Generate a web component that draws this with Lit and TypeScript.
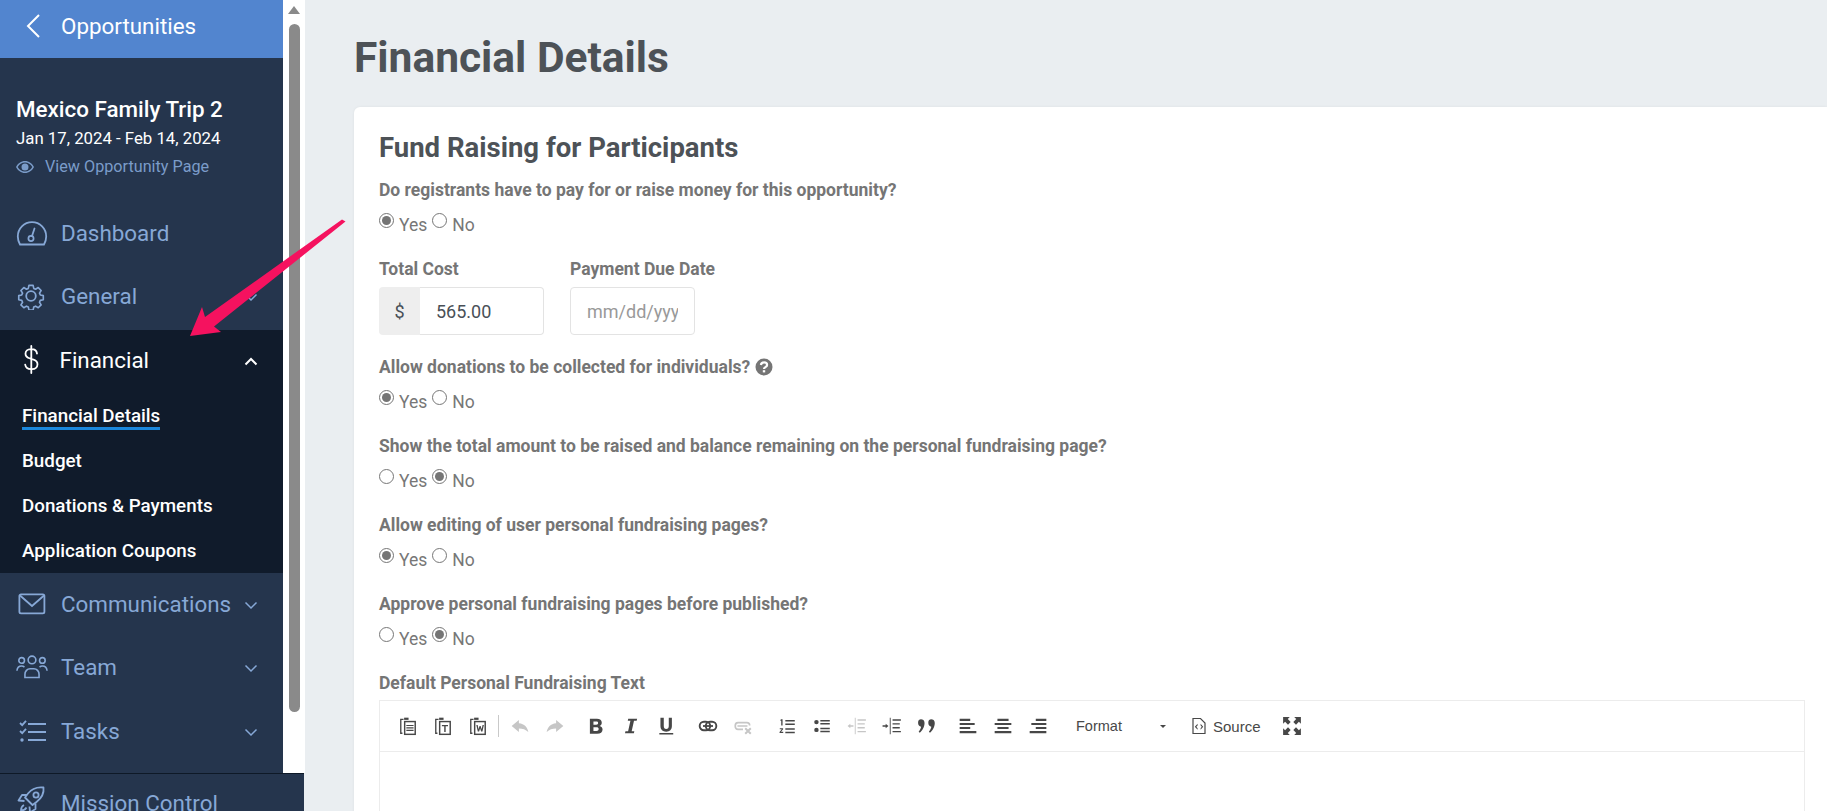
import { LitElement, html, css, svg } from "lit";
import { customElement } from "lit/decorators.js";

const stroke = (w: number, h: number, body: unknown, cls = "ic") =>
  html`<svg class=${cls} width=${w} height=${h} viewBox="0 0 ${w} ${h}" fill="none" stroke="currentColor">${body}</svg>`;

const icons: Record<string, unknown> = {
  dashboard: stroke(32, 26, svg`<path stroke-width="1.8" d="M4 24.500h24c1.400-2.400 2.200-5 2.200-8C30.200 8.500 24 2.200 16 2.200S1.800 8.500 1.800 16.500c0 3 .8 5.600 2.200 8z"/><circle cx="15" cy="18.500" r="2.600" stroke-width="1.700"/><path stroke-width="1.800" stroke-linecap="round" d="M16 16l2.500-7.500"/>`),
  gear: stroke(32, 28, svg`<g transform="translate(2 1)"><circle cx="13" cy="13" r="4.800" stroke-width="1.800"/><path stroke-width="1.800" stroke-linejoin="round" d="M10.700 1.300h4.600l.7 3.300 2 .9 2.900-1.800 3.200 3.200-1.800 2.900.9 2 3.300.7v4.600l-3.300.7-.9 2 1.800 2.900-3.200 3.200-2.900-1.800-2 .9-.7 3.300h-4.600l-.7-3.300-2-.9-2.900 1.800-3.200-3.200 1.800-2.900-.9-2-3.300-.7v-4.600l3.300-.7.9-2-1.800-2.900 3.200-3.200 2.900 1.800 2-.9z" transform="translate(1.200 1.200) scale(.91)"/></g>`),
  dollar: stroke(32, 30, svg`<path stroke-width="1.800" stroke-linecap="round" d="M21 8.500c-.4-2.600-2.400-4.300-5.300-4.300h-1c-3 0-5.200 2-5.200 4.600 0 2.500 1.500 3.900 4.500 4.700l3 .9c3 .8 4.500 2.300 4.500 4.900 0 2.800-2.300 4.900-5.400 4.900h-1.200c-3.100 0-5.200-1.700-5.700-4.500M15.300 1v27"/>`),
  mail: stroke(32, 24, svg`<rect x="3.400" y="2.400" width="25" height="19" rx="1.600" stroke-width="1.800"/><path stroke-width="1.800" d="M4 3.500l12 10.500 12-10.500"/>`),
  users: stroke(34, 26, svg`<g stroke-width="1.700"><circle cx="17" cy="5.500" r="4.100"/><circle cx="6" cy="6" r="3"/><circle cx="28" cy="6" r="3"/><path d="M9.500 24.200v-3.400c0-3.300 2.400-6 5.500-6h4c3.100 0 5.500 2.700 5.500 6v3.400z"/><path d="M1 17c.3-3 2.300-5 5-5 1.100 0 2 .3 3 1M33 17c-.3-3-2.300-5-5-5-1.100 0-2 .3-3 1"/></g>`),
  tasks: stroke(32, 24, svg`<g stroke-width="1.800"><path d="M12 5h18M12 13h18M12 21h18"/><path d="M4 4l2.200 2.200L10 1.800M4 12l2.200 2.200L10 9.800"/></g><circle cx="6" cy="21" r="1.700" fill="currentColor" stroke="none"/>`),
  rocket: stroke(32, 30, svg`<g stroke-width="1.800" stroke-linejoin="round"><path d="M27.500 2.500c-7-.8-12 1.500-15.500 6l-3 4 7.500 7.500 4-3c4.500-3.500 7.800-8 7-14.500z"/><circle cx="20" cy="10" r="2.600"/><path d="M11 10H6l-3.500 5.500 6 .5M19.500 18.500V24L14 27.500 13.500 21.500M8 20c-2 1-3 3-3 5.500 2.500 0 4.500-1 5.500-3"/></g>`),
};

const chevDown = html`<svg class="chev" width="14" height="9" viewBox="0 0 14 9" fill="none" stroke="currentColor" stroke-width="1.500"><path d="M1.500 1.500L7 7l5.500-5.500"/></svg>`;
const chevUp = html`<svg class="chev" width="14" height="9" viewBox="0 0 14 9" fill="none" stroke="currentColor" stroke-width="2"><path d="M1.500 7.500L7 2l5.500 5.500"/></svg>`;

const tb = (body: unknown, muted = false) =>
  html`<span class="tbtn ${muted ? "muted" : ""}"><svg width="20" height="20" viewBox="0 0 18 18" fill="currentColor">${body}</svg></span>`;

const clip = (inner: unknown) => svg`<path fill="none" stroke="currentColor" stroke-width="1.200" d="M5 3H2.500v12.500H4"/><path d="M5.500 1.500h4v2h-4z"/><rect x="6" y="5" width="9.500" height="11.500" fill="none" stroke="currentColor" stroke-width="1.300"/>${inner}`;

const T = {
  paste: clip(svg`<path d="M7.500 8h6.500v1H7.500zM7.500 10.200h6.500v1H7.500zM7.500 12.400h6.500v1H7.500z"/>`),
  pasteT: clip(svg`<path d="M8 8h5.500v1.300h-2.100v5h-1.300v-5H8z"/>`),
  pasteW: clip(svg`<path d="M7.500 8h1.200l.8 4 .9-3h1l.9 3 .8-4h1.200l-1.300 6h-1.200l-.9-3-.9 3H8.800z"/>`),
  undo: svg`<path d="M8 3.500L1.500 9 8 14.500v-3.300c3.500 0 6 .8 8.500 3.300-.8-4.500-3.500-7.500-8.500-8z"/>`,
  redo: svg`<path d="M10 3.500L16.500 9 10 14.500v-3.300c-3.500 0-6 .8-8.500 3.300.8-4.500 3.500-7.500 8.500-8z"/>`,
  bold: svg`<path fill-rule="evenodd" d="M3.500 2.500h6.300c2.800 0 4.400 1.300 4.400 3.500 0 1.400-.7 2.400-2 2.900 1.700.4 2.700 1.600 2.700 3.300 0 2.500-1.800 3.800-4.900 3.800H3.500zM6.700 5v2.900h2.500c1.100 0 1.700-.5 1.700-1.500S10.300 5 9.200 5zM6.700 10.200v3.300h2.800c1.200 0 1.900-.6 1.900-1.700s-.7-1.600-1.900-1.600z"/>`,
  italic: svg`<path d="M6.500 2.500h8l-.4 1.800h-2.400L9.600 13.700H12l-.4 1.800h-8l.4-1.800h2.400l2.100-9.400H6.100z"/>`,
  underline: svg`<path d="M4 1.500h3v7.500c0 1.700.7 2.600 2.200 2.600s2.300-.9 2.300-2.600V1.500h2.800v7.600c0 3.300-1.900 5-5.100 5S4 12.400 4 9.100zM3 15.300h12.500v1.400H3z"/>`,
  link: svg`<g fill="none" stroke="currentColor" stroke-width="1.700"><rect x="1.500" y="5.200" width="9.500" height="7.600" rx="3.800"/><rect x="7" y="5.200" width="9.500" height="7.600" rx="3.800"/></g><path d="M4.500 8.200h9v1.600h-9z"/>`,
  unlink: svg`<path fill="none" stroke="currentColor" stroke-width="1.500" d="M9 12H4.500C3 12 2 10.800 2 9s1-3 2.500-3h8C14 6 15 7 15 8.500M4 9h9"/><path fill="none" stroke="currentColor" stroke-width="1.800" d="M11 11l5 5M16 11l-5 5"/>`,
  ol: svg`<path d="M7.500 3.500H16v1.400H7.500zM7.500 6.700H16v1.400H7.500zM7.500 11H16v1.400H7.500zM7.500 14.200H16v1.400H7.500zM3.500 3H5v5.500H3.800V4.200h-.9zM2.500 11h3v1l-1.900 2.200h2v1.100H2.300v-1l2-2.300H2.500z"/>`,
  ul: svg`<circle cx="4" cy="5.500" r="2"/><circle cx="4" cy="12.500" r="2"/><path d="M7.500 3.500H16v1.400H7.500zM7.500 6.200H16v1.400H7.500zM7.500 10.500H16v1.400H7.500zM7.500 13.200H16v1.400H7.500z"/>`,
  outdent: svg`<path d="M7 1.500h.8v15H7zM9.500 3H17v1.200H9.500zM9.500 6.500H16v1.200H9.500zM9.500 10H16v1.200H9.500zM9.500 13.500H17v1.200H9.500zM5.800 8.400v1.200H3v1.500L.5 9 3 6.900v1.500z"/>`,
  indent: svg`<path d="M7 1.500h.8v15H7zM9.500 3H17v1.200H9.500zM9.500 6.500H16v1.200H9.500zM9.500 10H16v1.200H9.500zM9.500 13.500H17v1.200H9.500zM.5 8.400v1.200h2.800v1.500L5.800 9 3.300 6.900v1.500z"/>`,
  quote: svg`<path d="M1 5.500C1 4.100 2.100 3 3.600 3s3.200 1 3.200 3.200c0 3.800-2.300 7-4.300 8.800l-1-.8c1.100-1.500 2-3 2.200-4.500C2.100 9.400 1 8 1 6.500zM10.200 5.500C10.200 4.100 11.300 3 12.800 3S16 4 16 6.200c0 3.800-2.300 7-4.300 8.800l-1-.8c1.100-1.500 2-3 2.200-4.500-1.600-.3-2.700-1.700-2.700-3.200z"/>`,
  left: svg`<path d="M1.500 2.500h9.500v2H1.500zM1.500 6.200H15v2H1.500zM1.500 9.800h9.500v2H1.500zM1.500 13.500H16.500v2H1.500z"/>`,
  center: svg`<path d="M4 2.500h10v2H4zM1.500 6.200h15v2h-15zM4 9.800h10v2H4zM1.500 13.500h15v2h-15z"/>`,
  right: svg`<path d="M7 2.500h9.500v2H7zM3 6.200h13.500v2H3zM7 9.800h9.500v2H7zM1.500 13.500h15v2h-15z"/>`,
  source: svg`<path fill="none" stroke="currentColor" stroke-width="1.200" d="M3 1.500h7.500L15 6v10.500H3z"/><path d="M7.600 6.800L4.800 9.800l2.800 3v-1.600L6.300 9.800l1.300-1.400zM10.600 6.800l2.600 3-2.600 3v-1.600l1.200-1.400-1.200-1.400z"/>`,
  max: svg`<path d="M1 1h6L5.200 2.800 7.800 5.400 5.400 7.800 2.800 5.200 1 7zM17 1v6l-1.800-1.800-2.600 2.600-2.400-2.400 2.600-2.600L11 1zM1 17v-6l1.800 1.800 2.600-2.600 2.400 2.400-2.600 2.600L7 17zM17 17h-6l1.800-1.800-2.600-2.600 2.400-2.400 2.600 2.600L17 11z"/>`,
};

@customElement("app-root")
export class AppRoot extends LitElement {
  static styles = css`
    :host { display: block; height: 811px; overflow: hidden; position: relative; font-family: Roboto, sans-serif; background: #eaeef1; }
    .page { display: flex; height: 811px; }
    .side { width: 304px; flex: none; height: 811px; display: flex; flex-direction: column; }
    .sidetop { display: flex; height: 773px; flex: none; }
    .nav { width: 283px; flex: none; background: #25354d; overflow: hidden; }
    .track { flex: 1; background: #fff; padding: 6px 5px 0; display: flex; flex-direction: column; align-items: center; }
    .up { width: 0; height: 0; border-left: 6px solid transparent; border-right: 6px solid transparent; border-bottom: 8px solid #8a8a8a; }
    .thumb { width: 11px; flex: none; margin-top: 10px; height: 688px; background: #8a8a8a; border-radius: 6px; }
    .back { height: 58px; background: #5285cf; display: flex; align-items: center; color: #fff; font-size: 22.400px; padding: 0 0 6px 26px; box-sizing: border-box; gap: 21px; }
    .info { padding: 38px 0 0 16px; height: 143px; box-sizing: border-box; color: #fff; }
    .trip { font-size: 22.400px; font-weight: 500; line-height: 26px; }
    .dates { font-size: 16.800px; line-height: 20px; margin-top: 6px; }
    .view { font-size: 16.200px; color: #7b9cc9; display: flex; align-items: center; gap: 11px; line-height: 20px; margin-top: 9px; }
    .row { display: flex; align-items: center; height: 63.500px; padding-left: 16px; color: #87a8d6; font-size: 22.400px; box-sizing: border-box; }
    .icbox { width: 32px; margin-right: 13px; display: flex; justify-content: center; flex: none; }
    .row .lbl { flex: 1; }
    .chev { margin-right: 25px; margin-top: 3px; }
    .active { background: #101b2b; height: 243px; margin-top: 2px; }
    .active .row { color: #fff; height: 60px; }
    .active .icbox { margin-right: 11.500px; }
    .subs { padding-left: 22px; display: flex; flex-direction: column; padding-top: 3px; }
    .sub { height: 45px; display: flex; align-items: center; }
    .sub span { color: #fff; font-size: 18.800px; font-weight: 500; line-height: 22px; }
    .sub .cur { border-bottom: 3px solid #1b87dc; margin-top: 3px; }
    .rest { margin-top: -1px; }
    .bottom { flex: 1; background: #25354d; border-top: 1px solid #0e1927; color: #87a8d6; display: flex; padding-top: 8px; padding-left: 16px; font-size: 22.400px; box-sizing: border-box; align-items: flex-start; }
    .bottom .icbox { margin-top: 3px; }
    .bottom span { line-height: 42px; }
    .main { flex: 1; padding: 0 0 0 50px; min-width: 0; }
    h1 { margin: 0; font-size: 42.500px; font-weight: 700; color: #4d5257; line-height: 48px; padding-top: 34px; height: 73px; }
    .card { background: #fff; border-radius: 6px 0 0 0; padding: 21px 22px 0 25px; height: 800px; box-shadow: 0 0 3px rgba(0,0,0,.06); }
    h2 { margin: 0; font-size: 27.500px; font-weight: 700; color: #4d5257; line-height: 40px; }
    .q { font-size: 17.500px; font-weight: 700; color: #757575; line-height: 24px; display: flex; align-items: center; gap: 5px; }
    .first { margin-top: 10px; }
    .radios { display: flex; align-items: flex-start; height: 24px; margin-top: 9px; margin-bottom: 22px; font-size: 17.500px; color: #777; line-height: 24px; }
    .radios input { width: 15px; height: 15px; margin: 2px 5px 0 0; accent-color: #757575; }
    .radios label { display: flex; margin-right: 5px; }
    .radios span { margin-top: 2px; }
    .fields { display: flex; gap: 26px; margin-bottom: 20px; }
    .field .q { margin-bottom: 6px; }
    .ctl { height: 48px; display: flex; box-sizing: border-box; }
    .addon { width: 41px; background: #eee; color: #495057; display: flex; align-items: center; justify-content: center; font-size: 18px; border-radius: 4px 0 0 4px; }
    input.text { font: 18px Roboto, sans-serif; color: #495057; border: 1px solid #e3e3e3; padding: 0 16px; box-sizing: border-box; height: 48px; outline: none; background: #fff; }
    input.cost { width: 124px; border-radius: 0 4px 4px 0; border-left: 0; }
    input.date { width: 125px; border-radius: 4px; }
    input.date::placeholder { color: #999; }
    .editor { border: 1px solid #ececec; border-bottom: 0; margin-top: 5px; height: 200px; font-family: "Liberation Sans", sans-serif; }
    .tools { height: 50px; border-bottom: 1px solid #ececec; display: flex; align-items: center; padding-left: 10px; color: #474747; }
    .tbtn { width: 35px; height: 24px; display: flex; align-items: center; justify-content: center; flex: none; }
    .muted { color: #c6c6c6; }
    .sep { width: 1px; height: 22px; background: #c9c9c9; margin: 0 3px; }
    .g { display: flex; }
    .g0 { margin-left: 6px; }
    .g1 { margin-left: 9px; }
    .g2 { margin-left: 7px; }
    .g3 { margin-left: 6px; }
    .fmt { width: 113px; margin-left: 21px; display: flex; align-items: center; font-size: 14.500px; color: #484848; flex: none; }
    .fmt span { flex: 1; }
    .caret { width: 0; height: 0; border-left: 3.500px solid transparent; border-right: 3.500px solid transparent; border-top: 3.500px solid #474747; margin-right: 23px; }
    .src { display: flex; align-items: center; gap: 5px; font-size: 15px; color: #484848; margin-right: 14px; flex: none; margin-left: 1px; }
    .arrow { position: absolute; left: 0; top: 0; pointer-events: none; }
    .help { flex: none; }
  `;

  private radio(name: string, yes: boolean) {
    return html`<div class="radios">
      <label><input type="radio" name=${name} ?checked=${yes} /><span>Yes</span></label>
      <label><input type="radio" name=${name} ?checked=${!yes} /><span>No</span></label>
    </div>`;
  }

  private item(icon: string, label: string) {
    return html`<div class="row"><span class="icbox">${icons[icon]}</span><span class="lbl">${label}</span>${chevDown}</div>`;
  }

  render() {
    return html`
      <div class="page">
        <aside class="side">
          <div class="sidetop">
            <nav class="nav">
              <div class="back">
                <svg width="14" height="24" viewBox="0 0 14 24" fill="none" stroke="currentColor" stroke-width="2"><path d="M13 1L2 12l11 11"/></svg>
                <span>Opportunities</span>
              </div>
              <div class="info">
                <div class="trip">Mexico Family Trip 2</div>
                <div class="dates">Jan 17, 2024 - Feb 14, 2024</div>
                <div class="view">
                  <svg width="18" height="12" viewBox="0 0 18 12" fill="currentColor"><path fill-rule="evenodd" d="M9 0c3.900 0 7.200 2.400 9 6-1.800 3.600-5.100 6-9 6s-7.200-2.400-9-6c1.800-3.600 5.100-6 9-6zm0 1.500C6 1.500 3.300 3.200 1.700 6 3.300 8.800 6 10.500 9 10.500s5.700-1.700 7.300-4.500C14.700 3.200 12 1.500 9 1.500zM9 2.500a3.500 3.500 0 1 1 0 7 3.500 3.500 0 0 1 0-7z"/></svg>
                  <span>View Opportunity Page</span>
                </div>
              </div>
              <div class="row"><span class="icbox">${icons.dashboard}</span><span class="lbl">Dashboard</span></div>
              ${this.item("gear", "General")}
              <div class="active">
                <div class="row"><span class="icbox">${icons.dollar}</span><span class="lbl">Financial</span>${chevUp}</div>
                <div class="subs">
                  <div class="sub"><span class="cur">Financial Details</span></div>
                  <div class="sub"><span>Budget</span></div>
                  <div class="sub"><span>Donations &amp; Payments</span></div>
                  <div class="sub"><span>Application Coupons</span></div>
                </div>
              </div>
              <div class="rest">
                ${this.item("mail", "Communications")}
                ${this.item("users", "Team")}
                ${this.item("tasks", "Tasks")}
              </div>
            </nav>
            <div class="track"><div class="up"></div><div class="thumb"></div></div>
          </div>
          <div class="bottom"><span class="icbox">${icons.rocket}</span><span>Mission Control</span></div>
        </aside>
        <main class="main">
          <h1>Financial Details</h1>
          <section class="card">
            <h2>Fund Raising for Participants</h2>
            <div class="q first">Do registrants have to pay for or raise money for this opportunity?</div>
            ${this.radio("a", true)}
            <div class="fields">
              <div class="field">
                <div class="q">Total Cost</div>
                <div class="ctl"><span class="addon">$</span><input class="text cost" value="565.00" /></div>
              </div>
              <div class="field">
                <div class="q">Payment Due Date</div>
                <div class="ctl"><input class="text date" placeholder="mm/dd/yyyy" /></div>
              </div>
            </div>
            <div class="q">Allow donations to be collected for individuals?
              <svg class="help" width="18" height="18" viewBox="0 0 18 18"><circle cx="9" cy="9" r="8.500" fill="#757575"/><path fill="none" stroke="#fff" stroke-width="2.200" d="M5.900 7c.2-1.700 1.400-2.600 3.100-2.600 1.800 0 3.100 1 3.100 2.500 0 2.300-3.100 2.100-3.100 4.100"/><rect x="7.800" y="12.200" width="2.400" height="2.200" fill="#fff"/></svg>
            </div>
            ${this.radio("b", true)}
            <div class="q">Show the total amount to be raised and balance remaining on the personal fundraising page?</div>
            ${this.radio("c", false)}
            <div class="q">Allow editing of user personal fundraising pages?</div>
            ${this.radio("d", true)}
            <div class="q">Approve personal fundraising pages before published?</div>
            ${this.radio("e", false)}
            <div class="q">Default Personal Fundraising Text</div>
            <div class="editor">
              <div class="tools">
                ${tb(T.paste)}${tb(T.pasteT)}${tb(T.pasteW)}<span class="sep"></span>
                ${tb(T.undo, true)}${tb(T.redo, true)}
                <span class="g g0">${tb(T.bold)}${tb(T.italic)}${tb(T.underline)}</span>
                <span class="g g2">${tb(T.link)}${tb(T.unlink, true)}</span>
                <span class="g g1">${tb(T.ol)}${tb(T.ul)}${tb(T.outdent, true)}${tb(T.indent)}${tb(T.quote)}</span>
                <span class="g g3">${tb(T.left)}${tb(T.center)}${tb(T.right)}</span>
                <span class="fmt"><span>Format</span><i class="caret"></i></span>
                <span class="src"><svg width="18" height="18" viewBox="0 0 18 18" fill="currentColor">${T.source}</svg>Source</span>
                ${tb(T.max)}
              </div>
            </div>
          </section>
        </main>
      </div>
      <svg class="arrow" width="360" height="350" viewBox="0 0 360 350">
        <path fill="#f5125f" d="M342 219.500L345.500 221.500L214 326.500L221 332L190 336L202 307L205 317Z"/>
      </svg>
    `;
  }
}
